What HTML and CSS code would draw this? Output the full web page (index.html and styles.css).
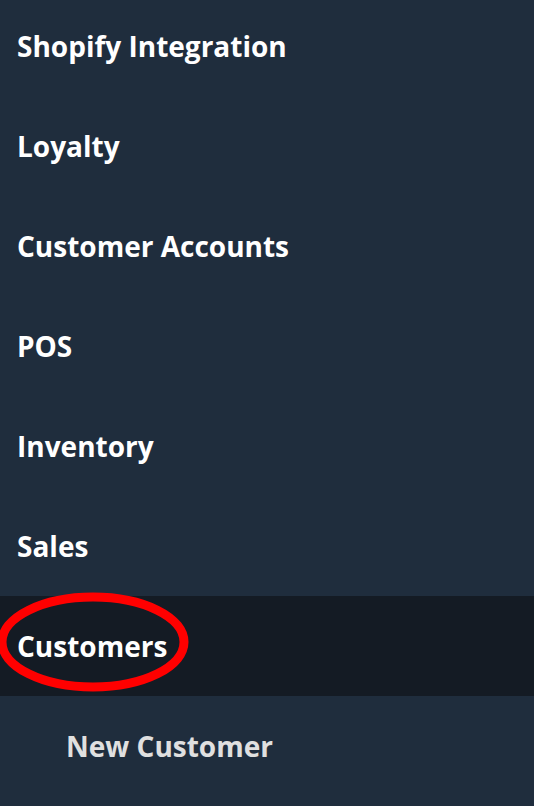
FILE: index.html
```html
<!DOCTYPE html>
<html lang="en">
<head>
<meta charset="UTF-8">
<meta name="viewport" content="width=device-width, initial-scale=1.0">
<title>Menu</title>
<link rel="stylesheet" href="styles.css">
</head>
<body>
<ul class="menu">
    <li class="menu-item">Shopify Integration</li>
    <li class="menu-item">Loyalty</li>
    <li class="menu-item">Customer Accounts</li>
    <li class="menu-item">POS</li>
    <li class="menu-item">Inventory</li>
    <li class="menu-item">Sales</li>
    <li class="menu-item active">
        Customers
        <svg class="circle-mark" width="200" height="110" viewBox="0 0 200 110">
            <ellipse cx="93" cy="50" rx="91" ry="45" fill="none" stroke="#ff0000" stroke-width="9"/>
        </svg>
    </li>
    <li class="menu-item sub">New Customer</li>
</ul>
</body>
</html>
```

FILE: styles.css
```css
body {
    margin: 0;
    background-color: #1f2d3d;
    font-family: "Open Sans", sans-serif;
    overflow: hidden;
}
.menu {
    list-style: none;
    margin: -4px 0 0 0;
    padding: 0;
}
.menu-item {
    position: relative;
    height: 100px;
    display: flex;
    align-items: center;
    padding-left: 17px;
    color: #fff;
    font-size: 28px;
    font-weight: 700;
}
.menu-item.active {
    background-color: #141b24;
}
.menu-item.sub {
    padding-left: 66px;
    color: #e0e0e0;
}
.circle-mark {
    position: absolute;
    left: 0;
    top: -4px;
}
```
